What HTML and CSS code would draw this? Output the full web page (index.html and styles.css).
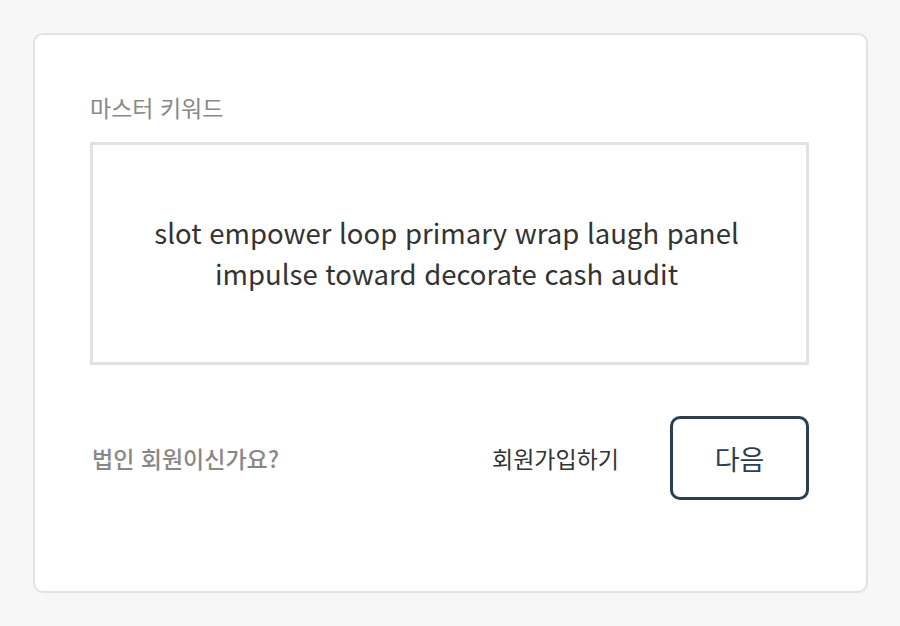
FILE: index.html
```html
<!DOCTYPE html>
<html lang="ko">
<head>
<meta charset="utf-8">
<link rel="stylesheet" href="styles.css">
</head>
<body>
<div class="card">
  <div class="label">마스터 키워드</div>
  <div class="keyword-box">
    <p class="keywords">slot empower loop primary wrap laugh panel<br>impulse toward decorate cash audit</p>
  </div>
  <div class="actions">
    <span class="corp">법인 회원이신가요?</span>
    <span class="signup">회원가입하기</span>
    <button class="next">다음</button>
  </div>
</div>
</body>
</html>
```
FILE: styles.css
```css
html, body {
  margin: 0;
  padding: 0;
}
body {
  background: #f7f7f7;
  font-family: "Noto Sans CJK KR", "Noto Sans", sans-serif;
  padding: 33px 32px 33px 33px;
  box-sizing: border-box;
  width: 900px;
  height: 626px;
}
.card {
  box-sizing: border-box;
  height: 560px;
  background: #fff;
  border: 2px solid #e2e2e2;
  border-radius: 10px;
  padding: 55px 57px 0 55px;
}
.label {
  font-size: 23px;
  line-height: 34px;
  color: #888;
  margin-bottom: 18px;
}
.keyword-box {
  box-sizing: border-box;
  height: 223px;
  border: 3px solid #e2e2e2;
  display: flex;
  align-items: center;
  justify-content: center;
  padding: 0 6px 2px 0;
}
.keywords {
  margin: 0;
  text-align: center;
  font-size: 27.5px;
  line-height: 41px;
  color: #333;
}
.actions {
  margin-top: 51px;
  display: flex;
  align-items: center;
}
.corp {
  font-size: 23px;
  font-weight: 500;
  color: #888;
  margin-left: 2px;
  flex: 1;
}
.signup {
  font-size: 23px;
  color: #333;
  margin-right: 51px;
}
.next {
  box-sizing: border-box;
  width: 139px;
  height: 84px;
  border: 3px solid #2c3e50;
  border-radius: 10px;
  background: #fff;
  font-family: inherit;
  font-size: 27px;
  color: #2c3e50;
  padding: 0;
}
```
